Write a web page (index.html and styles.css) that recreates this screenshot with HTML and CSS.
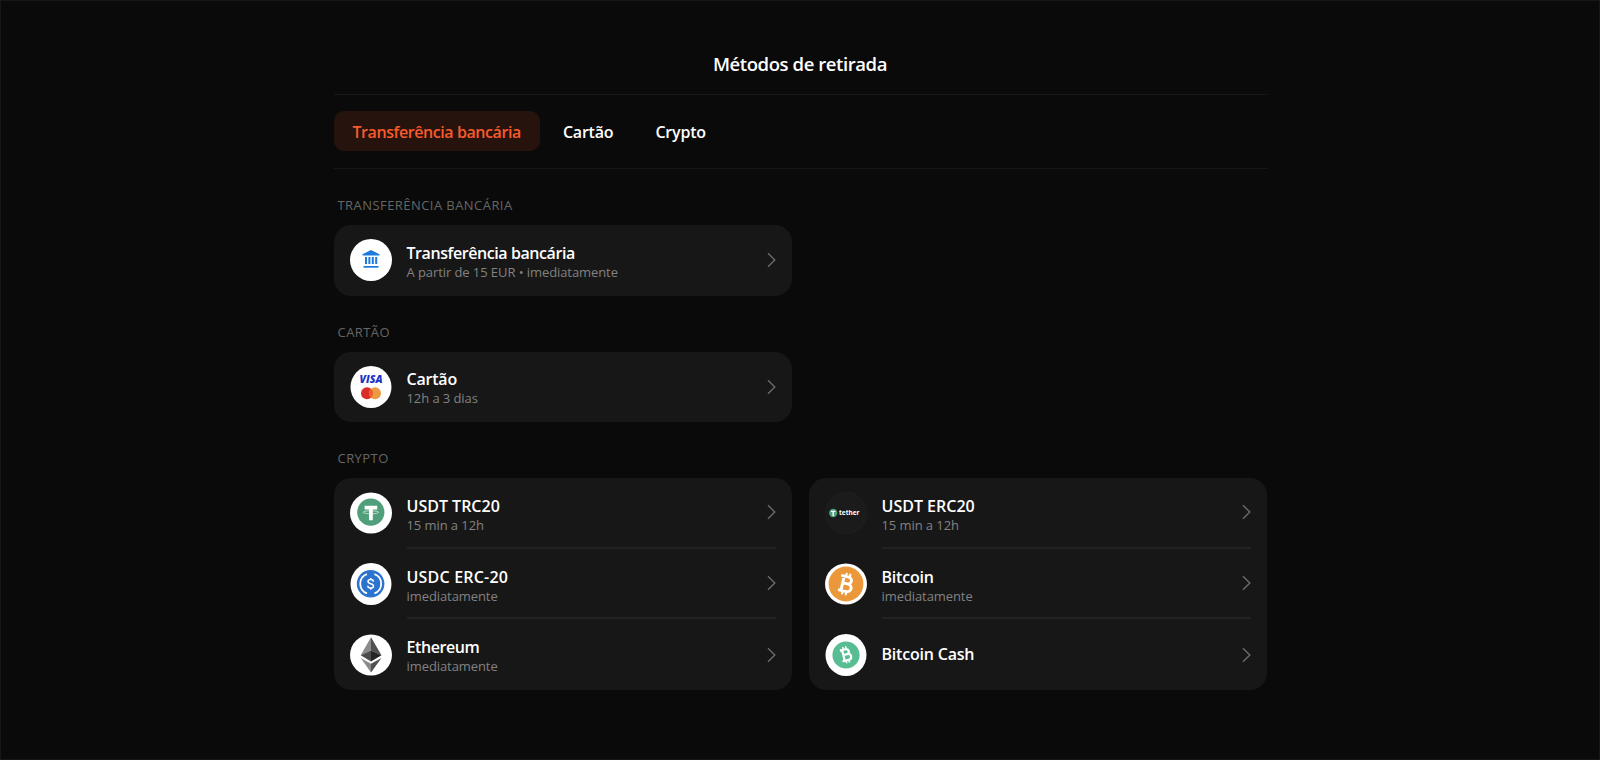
FILE: index.html
```
<!DOCTYPE html>
<html lang="pt">
<head>
  <meta charset="UTF-8" />
  <meta name="viewport" content="width=device-width, initial-scale=1.0"/>
  <title>Métodos de retirada</title>
  <link rel="stylesheet" href="styles.css">
</head>
<body>

<div class="page">
  <div class="container">
    <h1 class="page-title">Métodos de retirada</h1>

    <!-- Tabs -->
    <nav class="tabs">
      <a class="tab active">Transferência bancária</a>
      <a class="tab">Cartão</a>
      <a class="tab">Crypto</a>
    </nav>

    <!-- Bank transfer -->
    <section class="section">
      <h2 class="section-title">Transferência bancária</h2>
      <div class="grid">
        <div class="card">
          <div class="method">
            <svg class="logo" viewBox="0 0 42 42">
              <circle cx="21" cy="21" r="21" fill="#fff"/>
              <g fill="#1b7bdc">
                <path d="M21 11 29.5 15.2V16.4H12.5V15.2Z"/>
                <path d="M15 18h2v7h-2zM18.4 18h2v7h-2zM21.8 18h2v7h-2zM25.2 18h2v7h-2z"/>
                <path d="M13.5 27h15v1.7h-15z"/>
              </g>
            </svg>
            <div class="method-body">
              <div class="method-text">
                <h3 class="long">Transferência bancária</h3>
                <p>A partir de 15 EUR • imediatamente</p>
              </div>
              <svg class="chevron" viewBox="0 0 9 16"><path d="M1 1.2 7.8 8 1 14.8"/></svg>
            </div>
          </div>
        </div>
      </div>
    </section>

    <!-- Card -->
    <section class="section">
      <h2 class="section-title">Cartão</h2>
      <div class="grid">
        <div class="card">
          <div class="method">
            <svg class="logo" viewBox="0 0 42 42">
              <ellipse cx="21" cy="21" rx="20.5" ry="21" fill="#fff"/>
              <text class="visa" x="21" y="17" text-anchor="middle" textLength="23" lengthAdjust="spacingAndGlyphs">VISA</text>
              <circle cx="17" cy="27.3" r="6" fill="#da2b26"/>
              <circle cx="25" cy="27.3" r="6" fill="#eb9c42"/>
              <path d="M21 22.8a6 6 0 0 1 0 9 6 6 0 0 1 0-9z" fill="#ea5f2b"/>
            </svg>
            <div class="method-body">
              <div class="method-text">
                <h3>Cartão</h3>
                <p>12h a 3 dias</p>
              </div>
              <svg class="chevron" viewBox="0 0 9 16"><path d="M1 1.2 7.8 8 1 14.8"/></svg>
            </div>
          </div>
        </div>
      </div>
    </section>

    <!-- Crypto -->
    <section class="section">
      <h2 class="section-title">Crypto</h2>
      <div class="grid">
        <div class="card">
          <div class="method">
            <svg class="logo" viewBox="0 0 42 42">
              <ellipse cx="21" cy="21" rx="21" ry="20.5" fill="#fff"/>
              <circle cx="20.8" cy="20.2" r="13.6" fill="#4f9f7b"/>
              <path d="M14.6 13.8h12.6v3.6h-4.4v10.9h-3.8V17.4h-4.4z" fill="#fff"/>
              <ellipse cx="20.9" cy="20.3" rx="7.8" ry="1.5" fill="none" stroke="#fff" stroke-width=".6"/>
            </svg>
            <div class="method-body">
              <div class="method-text">
                <h3 class="ticker">USDT TRC20</h3>
                <p>15 min a 12h</p>
              </div>
              <svg class="chevron" viewBox="0 0 9 16"><path d="M1 1.2 7.8 8 1 14.8"/></svg>
            </div>
          </div>
          <div class="method">
            <svg class="logo" viewBox="0 0 42 42">
              <ellipse cx="21" cy="21" rx="20.5" ry="21" fill="#fff"/>
              <circle cx="20.6" cy="20.8" r="13.8" fill="#2b73ce"/>
              <g fill="none" stroke="#fff" stroke-width="1.8">
                <path d="M17 11.2a10.2 10.2 0 0 0 0 19.2M24.4 11.2a10.2 10.2 0 0 1 0 19.2"/>
                <path d="M23.4 18.6c-.1-1.4-1.1-2.1-2.7-2.1s-2.7.7-2.7 2c0 3 5.5 1.3 5.5 4.4 0 1.4-1.2 2.2-2.8 2.2s-2.9-.8-2.9-2.3M20.7 14.9v1.7M20.7 25v1.8" stroke-width="1.5"/>
              </g>
            </svg>
            <div class="method-body">
              <div class="method-text">
                <h3 class="ticker-wide">USDC ERC-20</h3>
                <p>imediatamente</p>
              </div>
              <svg class="chevron" viewBox="0 0 9 16"><path d="M1 1.2 7.8 8 1 14.8"/></svg>
            </div>
          </div>
          <div class="method">
            <svg class="logo" viewBox="0 0 42 42">
              <ellipse cx="21" cy="21" rx="21" ry="20.5" fill="#fff"/>
              <path d="M21 3.2 10.7 21.2 21 16.5z" fill="#8b8b8b"/>
              <path d="M21 3.2 31.5 21.2 21 16.5z" fill="#505050"/>
              <path d="M10.7 21.2 21 16.5V27.6z" fill="#4c4c4c"/>
              <path d="M31.5 21.2 21 16.5V27.6z" fill="#252525"/>
              <path d="M10.7 24 21 29.8V38.6z" fill="#8b8b8b"/>
              <path d="M31.5 24 21 29.8V38.6z" fill="#505050"/>
            </svg>
            <div class="method-body">
              <div class="method-text">
                <h3 class="long">Ethereum</h3>
                <p>imediatamente</p>
              </div>
              <svg class="chevron" viewBox="0 0 9 16"><path d="M1 1.2 7.8 8 1 14.8"/></svg>
            </div>
          </div>
        </div>

        <div class="card">
          <div class="method">
            <svg class="logo" viewBox="0 0 42 42">
              <circle cx="21" cy="21" r="20.5" fill="#1b1b1b" stroke="#202020"/>
              <circle cx="8.2" cy="21" r="4.2" fill="#4f9f7b"/>
              <path d="M6 18.8h4.4v1.3H8.9v3.9H7.5v-3.9H6z" fill="#fff"/>
              <text class="tether" x="14" y="23.4" textLength="20.5" lengthAdjust="spacingAndGlyphs">tether</text>
            </svg>
            <div class="method-body">
              <div class="method-text">
                <h3 class="ticker">USDT ERC20</h3>
                <p>15 min a 12h</p>
              </div>
              <svg class="chevron" viewBox="0 0 9 16"><path d="M1 1.2 7.8 8 1 14.8"/></svg>
            </div>
          </div>
          <div class="method">
            <svg class="logo" viewBox="0 0 42 42">
              <ellipse cx="21" cy="21" rx="21" ry="20.5" fill="#fff"/>
              <circle cx="21" cy="21" r="17.4" fill="#ea983a"/>
              <g transform="translate(21 21) rotate(13)" fill="none" stroke="#fff">
                <path d="M-6.5-7.3H1.2a3.3 3.3 0 0 1 0 6.9H-3.3M1.2-.4h.9a3.8 3.8 0 0 1 0 7.7H-6.5M-3.5-7.3V7.3" stroke-width="2.9"/>
                <path d="M-1.7-11v3.5M2.1-11v3.5M-1.7 7.5V11M2.1 7.5V11" stroke-width="2"/>
              </g>
            </svg>
            <div class="method-body">
              <div class="method-text">
                <h3>Bitcoin</h3>
                <p>imediatamente</p>
              </div>
              <svg class="chevron" viewBox="0 0 9 16"><path d="M1 1.2 7.8 8 1 14.8"/></svg>
            </div>
          </div>
          <div class="method">
            <svg class="logo" viewBox="0 0 42 42">
              <ellipse cx="21" cy="21" rx="20.5" ry="21" fill="#fff"/>
              <circle cx="21" cy="21" r="13.6" fill="#58bd92"/>
              <g transform="translate(21 20.8) rotate(-14) scale(.76)" fill="none" stroke="#fff">
                <path d="M-6.5-7.3H1.2a3.3 3.3 0 0 1 0 6.9H-3.3M1.2-.4h.9a3.8 3.8 0 0 1 0 7.7H-6.5M-3.5-7.3V7.3" stroke-width="2.9"/>
                <path d="M-1.7-11v3.5M2.1-11v3.5M-1.7 7.5V11M2.1 7.5V11" stroke-width="2"/>
              </g>
            </svg>
            <div class="method-body">
              <div class="method-text">
                <h3>Bitcoin Cash</h3>
              </div>
              <svg class="chevron" viewBox="0 0 9 16"><path d="M1 1.2 7.8 8 1 14.8"/></svg>
            </div>
          </div>
        </div>
      </div>
    </section>
  </div>
</div>

</body>
</html>
```
FILE: styles.css
```
* {
  box-sizing: border-box;
}
body {
  margin: 0;
  background-color: #0a0a0a;
  color: #fff;
  font-family: "Segoe UI", "Open Sans", "Noto Sans", sans-serif;
}
h1, h2, h3, p {
  margin: 0;
}
.page {
  height: 760px;
  border: 1px solid #171717;
  overflow: hidden;
}
.container {
  width: 933px;
  margin: 0 auto;
}
.page-title {
  height: 94px;
  padding-top: 49px;
  border-bottom: 1px solid #171717;
  font-size: 18.5px;
  font-weight: 600;
  line-height: 28px;
  text-align: center;
  letter-spacing: -0.42px;
}
.tabs {
  display: flex;
  gap: 4px;
  height: 74px;
  padding: 16px 0;
  border-bottom: 1px solid #171717;
}
.tab {
  height: 40px;
  padding: 0 19px;
  border-radius: 10px;
  font-size: 16px;
  font-weight: 600;
  line-height: 42px;
  letter-spacing: -0.2px;
}
.tab.active {
  background-color: #27130d;
  color: #f95a2c;
  letter-spacing: -0.42px;
}
.section {
  padding-top: 26px;
}
.section-title {
  height: 30px;
  padding-left: 4px;
  color: #666;
  font-size: 13px;
  font-weight: 500;
  line-height: 20px;
  letter-spacing: 0.44px;
  text-transform: uppercase;
}
.grid {
  display: grid;
  grid-template-columns: 1fr 1fr;
  gap: 17px;
}
.card {
  background-color: #171717;
  border-radius: 17px;
}
.method {
  display: flex;
  align-items: center;
  height: 70.6px;
  padding: 0 16px;
}
.logo {
  flex: none;
  width: 42px;
  height: 42px;
  margin-right: 15px;
}
.method-body {
  flex: 1;
  display: flex;
  align-items: center;
  justify-content: space-between;
  height: 100%;
  border-bottom: 2px solid #222;
}
.method:last-child .method-body {
  border-bottom: none;
}
.method-text {
  padding-top: 3px;
}
.method:not(:last-child) .method-text {
  padding-top: 5px;
}
.method-text h3 {
  font-size: 16px;
  font-weight: 600;
  line-height: 20px;
  letter-spacing: -0.2px;
}
.method-text h3:only-child {
  margin-bottom: 4px;
}
.method-text .long {
  letter-spacing: -0.42px;
}
.method-text .ticker {
  letter-spacing: 0;
}
.method-text .ticker-wide {
  letter-spacing: 0.2px;
}
.method-text p {
  color: #828282;
  font-size: 13px;
  line-height: 18px;
  letter-spacing: -0.08px;
}
.chevron {
  width: 9px;
  height: 16px;
  fill: none;
  stroke: #6b6b6b;
  stroke-width: 1.4;
}
.visa {
  fill: #1c34c4;
  font-family: "Open Sans", sans-serif;
  font-size: 10.5px;
  font-style: italic;
  font-weight: 800;
}
.tether {
  fill: #fff;
  font-family: "Open Sans", sans-serif;
  font-size: 7px;
  font-weight: 700;
}
```
